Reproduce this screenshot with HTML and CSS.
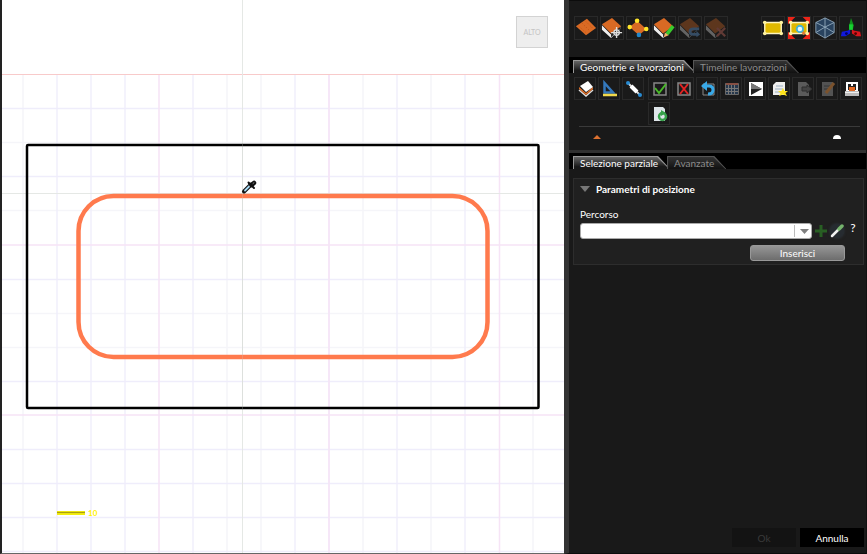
FILE: index.html
```html
<!DOCTYPE html>
<html lang="it">
<head>
<meta charset="utf-8">
<title>Geometrie e lavorazioni</title>
<link rel="stylesheet" href="styles.css">
</head>
<body>
<main class="app">
  <section class="viewport" aria-label="Vista pezzo">
    <svg class="drawing" viewBox="0 0 562 553" preserveAspectRatio="xMinYMin slice">
      <g fill="none" stroke-width="1">
        <path stroke="#f5f5f9" stroke-width="1.500" d="M21 74V553M225 74V553M259 74V553M361 74V553M429 74V553M531 74V553M0 142.500H562M0 210.500H562M0 313.500H562M0 347.500H562"/>
        <path stroke="#efedfb" stroke-width="1.300" d="M55 74V553M89 74V553M123 74V553M191 74V553M293 74V553M327 74V553M395 74V553M463 74V553M0 108.500H562M0 176.500H562M0 279.500H562M0 381.500H562M0 449.500H562M0 483.500H562M0 517.500H562M0 551.500H562"/>
        <path stroke="#f6e4f6" stroke-width="1.500" d="M157 74V553M327 74V553M497.500 74V553M0 245H562M0 415H562"/>
        <path stroke="#f8caca" d="M0 74.500H562"/>
        <path stroke="#e5e8e5" d="M240.500 0V553M0 193.500H562"/>
      </g>
      <rect x="25" y="145" width="511.500" height="263" rx="1" fill="none" stroke="#000" stroke-width="2.500"/>
      <rect x="76.500" y="196" width="409" height="161" rx="35" fill="none" stroke="#ff7a4d" stroke-width="4.500"/>
      <path d="M240.500 144V409" stroke="#c8ccc8" stroke-width="1" opacity=".25"/>
      <g stroke-linecap="round">
        <path d="M242 191.500L249 184.500" stroke="#111" stroke-width="4"/>
        <path d="M243 190.500L247.500 186" stroke="#a9dcf6" stroke-width="1.800"/>
        <path d="M246.500 182.500L252 188" stroke="#111" stroke-width="2"/>
        <path d="M249.500 185L252 183" stroke="#111" stroke-width="4.500"/>
        <path d="M251 183.500L252 182.700" stroke="#888" stroke-width="1"/>
      </g>
      <path d="M55 513H83" stroke="#f4ee10" stroke-width="4"/>
      <path d="M55 512.500H83" stroke="#aaa010" stroke-width="1.200"/>
      <text class="scale" x="86" y="516">10</text>
    </svg>
    <button class="view-face" type="button">ALTO</button>
  </section>

  <aside class="panel">
    <div class="toolbar">
      <div class="tools">
        <button class="tool" type="button" aria-label="Pezzo"><svg viewBox="0 0 24 24"><path fill="#d96a24" d="M1 10L13 2L23 12L12 20Z"/><path stroke="#b94f12" stroke-dasharray="1 2" d="M4 10L12 17M8 7L16 15M12 5L19 12"/></svg></button>
        <button class="tool" type="button" aria-label="Posiziona pezzo"><svg viewBox="0 0 24 24"><use href="#book"/><g fill="none" stroke="#ddd" stroke-width="1.500"><circle cx="17" cy="17" r="3"/><path d="M17 11V23M11 17H23"/></g></svg></button>
        <button class="tool" type="button" aria-label="Vertici"><svg viewBox="0 0 24 24"><path fill="#d96a24" d="M3 11L11 4L21 13L13 20Z"/><g fill="#ffe52a"><circle cx="11" cy="4" r="2.500"/><circle cx="3" cy="11" r="2.500"/><circle cx="21" cy="13" r="2.500"/></g><circle cx="13" cy="19.500" r="2.500" fill="#2286c8"/></svg></button>
        <button class="tool" type="button" aria-label="Modifica pezzo"><svg viewBox="0 0 24 24"><use href="#book"/><path stroke="#39c92c" stroke-width="4" d="M22 10L15 19"/><path fill="#f4b06b" d="M13 17L17 20L12 22Z"/></svg></button>
        <button class="tool off" type="button" disabled aria-label="Ripristina pezzo"><svg viewBox="0 0 24 24"><use href="#book"/><path fill="none" stroke="#69a9ee" stroke-width="3" d="M22 13H16Q12 13 12 16T16 19H20"/><path fill="#69a9ee" d="M19 15L23 19L19 22Z"/></svg></button>
        <button class="tool off" type="button" disabled aria-label="Elimina pezzo"><svg viewBox="0 0 24 24"><use href="#book"/><path stroke="#e57667" stroke-width="2.500" d="M13 12L22 21M22 12L13 21"/></svg></button>
      </div>
      <div class="tools">
        <button class="tool" type="button" aria-label="Adatta vista"><svg viewBox="0 0 24 24"><use href="#frame"/></svg></button>
        <button class="tool" type="button" aria-label="Zoom su pezzo"><svg viewBox="0 0 24 24"><path fill="#ee2418" d="M0 0H8L0 8ZM24 0V8L16 0ZM0 24V16L8 24ZM24 24H16L24 16Z"/><use href="#frame"/><path stroke="#dd7a35" stroke-width="3" d="M15 15L18 19"/><circle cx="13" cy="13" r="3.500" fill="#e8faff" stroke="#45b2d4" stroke-width="2"/></svg></button>
        <button class="tool" type="button" aria-label="Vista 3D"><svg viewBox="0 0 24 24"><path fill="#29435f" stroke="#8ea5b8" d="M12 1L22 6V17L12 23L2 17V6Z"/><path fill="none" stroke="#91a8bb" d="M2 6L12 11L22 6M12 1V23M2 17L12 11L22 17"/></svg></button>
        <button class="tool" type="button" aria-label="Assi"><svg viewBox="0 0 24 24"><path fill="#10951b" d="M12 1L15 9L14 14H10V9Z"/><path fill="#18d332" d="M10 8H14V14H10Z"/><path fill="#1018dd" d="M11 14V18L6 21H1L2 16L8 15Z"/><path fill="#d9151c" d="M13 14V18L18 21H23L22 16L16 15Z"/><circle cx="17" cy="18" r="1.500" fill="#500"/><circle cx="7" cy="18" r="1.500" fill="#006"/></svg></button>
      </div>
    </div>

    <div class="tabs" role="tablist">
      <button class="tab on" role="tab" aria-selected="true" type="button"><span>Geometrie e lavorazioni</span></button>
      <button class="tab" role="tab" aria-selected="false" type="button"><span>Timeline lavorazioni</span></button>
    </div>

    <div class="operations">
      <div class="op-groups">
        <div class="op-grid first">
          <button class="op" type="button" aria-label="Facce"><svg viewBox="0 0 22 22"><path fill="none" stroke="#ddd" stroke-width="1.500" d="M4 12L11 18L18 12"/><path fill="#dd6d26" d="M4 9L11 15L18 9V11L11 17L4 11Z"/><path fill="#fff" d="M5 8L13 3L18 9L11 14Z"/></svg></button>
          <button class="op" type="button" aria-label="Geometria"><svg viewBox="0 0 22 22"><path fill="none" stroke="#3478bc" stroke-width="2.500" d="M5.500 5V14.500H14Z"/><path stroke="#f2d94b" stroke-width="2.500" d="M4 17H18"/></svg></button>
          <button class="op" type="button" aria-label="Segmento"><svg viewBox="0 0 22 22"><path stroke="#ddd" stroke-width="2" d="M5 5L17 17"/><path stroke="#fff" stroke-width="4" d="M8 8L14 14"/><circle cx="5" cy="5" r="2" fill="#278bd2"/><circle cx="17" cy="17" r="2" fill="#278bd2"/></svg></button>
        </div>
        <div class="op-grid">
          <button class="op" type="button" aria-label="Attiva"><svg viewBox="0 0 22 22"><path fill="none" stroke="#888" stroke-width="1.500" d="M5 5H17V17H5Z"/><path fill="none" stroke="#49ba28" stroke-width="2" d="M6 10L10 15L17 6"/></svg></button>
          <button class="op" type="button" aria-label="Disattiva"><svg viewBox="0 0 22 22"><path fill="none" stroke="#888" stroke-width="1.500" d="M5 5H17V17H5Z"/><path stroke="#e32222" stroke-width="2" d="M7 6L15 16M15 6L7 16"/></svg></button>
          <button class="op" type="button" aria-label="Annulla selezione"><svg viewBox="0 0 22 22"><path fill="none" stroke="#888" d="M6 6H17V17H6Z"/><path fill="none" stroke="#38a9e8" stroke-width="3" d="M8 8H12Q16 8 16 12T11 16"/><path fill="#38a9e8" d="M4 8L10 3V13Z"/></svg></button>
          <button class="op" type="button" aria-label="Tabella"><svg viewBox="0 0 22 22"><path fill="#26384d" stroke="#686868" d="M4.500 5.500H17.500V16.500H4.500Z"/><path stroke="#777" d="M7.500 6V16M10.500 6V16M13.500 6V16M5 10.500H17M5 13.500H17"/><path stroke="#864f43" stroke-width="2" d="M5 6H17"/></svg></button>
          <button class="op" type="button" aria-label="Simula"><svg viewBox="0 0 22 22"><path fill="#fff" d="M4 4H18V18H4Z"/><path fill="#222" d="M6 5L17 11L6 17Z"/><path fill="#777" d="M6 5L17 11H6Z"/></svg></button>
          <button class="op" type="button" aria-label="Nuova lavorazione"><svg viewBox="0 0 22 22"><path fill="#eee" d="M7 4H16V17H4V7Z"/><path stroke="#9aaec0" d="M7 8H14M6 11H14M6 14H12"/><path fill="#ffe31c" d="M14 10L15.500 13H19L16.500 15L18 18L14 16.500L10 18L11.500 15L9 13H12.500Z"/></svg></button>
          <button class="op dim" type="button" disabled aria-label="Esporta lavorazione"><svg viewBox="0 0 22 22"><path fill="#aaa" d="M5 4H13L16 7V18H5Z"/><path fill="#777" stroke="#444" d="M9 9H14V7L19 11L14 15V13H9Z"/></svg></button>
          <button class="op dim" type="button" disabled aria-label="Modifica lavorazione"><svg viewBox="0 0 22 22"><path fill="#999" d="M5 4H16V18H5Z"/><path stroke="#555" d="M7 8H13M7 11H13"/><path stroke="#f19744" stroke-width="3" d="M17 5L9 15"/></svg></button>
          <button class="op" type="button" aria-label="Macchina"><svg viewBox="0 0 22 22"><path fill="#fff" d="M5 4H17V14H5Z"/><path fill="#222" d="M7 6H10V8H12V6H15V12H7Z"/><path fill="#e46922" d="M8 9H14V13H8Z"/><path fill="#bbb" d="M4 13H18V18H4Z"/><path stroke="#eee" d="M4 14.500H18"/></svg></button>
          <button class="op" type="button" aria-label="Aggiorna"><svg viewBox="0 0 22 22"><path fill="#dfe6ea" d="M5 4H14L16 6V18H5Z"/><circle cx="13.500" cy="13.500" r="3.500" fill="none" stroke="#36a14a" stroke-width="2.500"/><path fill="#36a14a" d="M12 7L17 10L12 13Z"/></svg></button>
        </div>
      </div>
      <div class="track">
        <svg class="mark" viewBox="0 0 10 5"><path fill="#dc7130" d="M1 4L5 0L9 4Z"/></svg>
        <svg class="mark" viewBox="0 0 10 5"><path fill="#fff" d="M1 4Q1 0 5 0T9 4Z"/></svg>
      </div>
    </div>

    <div class="tabs" role="tablist">
      <button class="tab on" role="tab" aria-selected="true" type="button"><span>Selezione parziale</span></button>
      <button class="tab" role="tab" aria-selected="false" type="button"><span>Avanzate</span></button>
    </div>

    <form class="params">
      <h2 class="params-title"><svg class="chevron" viewBox="0 0 10 6"><path fill="#777" d="M0 0H10L5 6Z"/></svg>Parametri di posizione</h2>
      <label class="label" for="percorso">Percorso</label>
      <div class="field">
        <div class="combo">
          <select id="percorso" class="select"><option></option></select>
          <svg class="arrow" viewBox="0 0 18 14"><path stroke="#bbb" d="M.5 1V13"/><path fill="#808080" d="M6 5H15L10.500 10Z"/></svg>
        </div>
        <button class="mini" type="button" aria-label="Aggiungi"><svg viewBox="0 0 14 14"><path stroke="#285f23" stroke-width="3" d="M7 1V13M1 7H13"/></svg></button>
        <button class="mini glow" type="button" aria-label="Preleva"><svg viewBox="0 0 14 14"><path stroke="#f2f2f2" stroke-width="2.500" stroke-linecap="round" d="M2 12L8 6"/><path stroke="#75b36c" stroke-width="3.500" stroke-linecap="round" d="M9 5L12 2"/></svg></button>
        <a class="help" href="#percorso">?</a>
      </div>
      <button class="insert" type="button">Inserisci</button>
    </form>

    <footer class="footer">
      <button class="action" type="button" disabled>Ok</button>
      <button class="action" type="button">Annulla</button>
    </footer>
  </aside>
</main>
<svg class="defs" aria-hidden="true">
  <defs>
    <g id="book"><path fill="#eee" d="M1 9L11 19L21 10V13L11 23L1 14Z"/><path fill="#222" d="M11 18L21 10V13L11 22Z"/><path fill="#d96a24" d="M1 8L12 1L22 10L11 18Z"/></g>
    <g id="frame"><path fill="#e0b900" stroke="#fff5bf" stroke-width="1.500" d="M3 6H21V18H3Z"/><g fill="#fff3a0"><circle cx="3" cy="6" r="2"/><circle cx="21" cy="6" r="2"/><circle cx="3" cy="18" r="2"/><circle cx="21" cy="18" r="2"/></g></g>
  </defs>
</svg>
</body>
</html>
```
FILE: styles.css
```css
* {
  box-sizing: border-box;
}

body {
  margin: 0;
  background: #191919;
  color: #fff;
  font-family: Lato, "Open Sans", sans-serif;
  font-size: 10px;
  line-height: 16px;
}

button,
select {
  margin: 0;
  padding: 0;
  border: 0;
  font: inherit;
  color: inherit;
}

.app {
  display: flex;
  height: 100vh;
}

.defs {
  position: absolute;
  width: 0;
  height: 0;
}

/* Drawing area */
.viewport {
  position: relative;
  flex: 1;
  min-width: 0;
  overflow: hidden;
  background: #fff;
  border-left: 2px solid #222;
  border-bottom: 1px solid #666;
}

.drawing {
  display: block;
  width: 100%;
  height: 100%;
}

.scale {
  fill: #fff200;
  font-size: 8px;
  font-weight: 700;
}

.view-face {
  position: absolute;
  top: 16px;
  right: 16px;
  width: 32px;
  height: 32px;
  background: #eee;
  border: 1px solid #d3d3d3;
  color: #c4c4c4;
  font-size: 7px;
}

/* Side panel */
.panel {
  display: flex;
  flex-direction: column;
  flex: 0 0 303px;
  border-left: 5px solid #333;
  border-right: 1px solid #111;
  border-bottom: 1px solid #0c0c0c;
}

.toolbar {
  display: flex;
  justify-content: space-between;
  padding: 15px 3px 17px 5px;
  border-top: 1px solid #0c0c0c;
}

.tools {
  display: flex;
  gap: 2px;
}

.tool,
.op {
  display: grid;
  place-items: center;
  background: #1a1a1a;
  border: 1px solid #292929;
}

.tool {
  width: 24px;
  height: 24px;
}

.tool svg,
.op svg {
  width: 22px;
  height: 22px;
  fill: none;
}

.off svg {
  opacity: 0.35;
}

.dim svg {
  opacity: 0.45;
}

/* Slanted tabs */
.tabs {
  display: flex;
  align-items: flex-end;
  height: 16px;
  padding: 0 4px;
  background: #000;
}

.tab {
  position: relative;
  height: 13px;
  padding: 0 12px 0 7px;
  background: #555;
  color: #8c8c8c;
  line-height: 12px;
  clip-path: polygon(0 0, calc(100% - 12px) 0, 100% 100%, 0 100%);
}

.tab::before {
  content: "";
  position: absolute;
  inset: 1px 1px 0;
  background: linear-gradient(#333, #111);
  clip-path: polygon(0 0, calc(100% - 12px) 0, 100% 100%, 0 100%);
}

.tab span {
  position: relative;
}

.tab + .tab {
  margin-left: -3px;
}

.tab.on {
  background: #999;
  color: #fff;
}

.tab.on::before {
  background: linear-gradient(#666, #191919 80%);
}

/* Operations */
.operations {
  padding: 4px 3px 10px 5px;
  border-bottom: 3px solid #303030;
}

.op-groups {
  display: flex;
  gap: 4px;
}

.op-grid {
  display: grid;
  grid-template-columns: repeat(9, 22px);
  align-content: start;
  gap: 2px;
}

.op-grid.first {
  grid-template-columns: repeat(3, 22px);
}

.op {
  width: 22px;
  height: 23px;
}

.track {
  display: flex;
  justify-content: space-between;
  margin: 1px 3px 0 5px;
  padding: 8px 18px 0 13px;
  border-top: 1px solid #3a3a3a;
}

.mark {
  width: 10px;
  height: 5px;
}

/* Parameters */
.params {
  display: flex;
  flex-direction: column;
  margin: 9px 2px 0 4px;
  padding: 2px 3px 3px 6px;
  background: #202020;
  border: 1px solid #2d2d2d;
}

.params-title {
  display: flex;
  align-items: center;
  gap: 6px;
  margin: 0;
  font-size: 10px;
  font-weight: 700;
}

.chevron {
  width: 10px;
  height: 6px;
}

.label {
  margin-top: 9px;
}

.field {
  display: flex;
  align-items: center;
  gap: 2px;
  height: 18px;
}

.combo {
  display: grid;
  flex: 1;
  align-items: center;
}

.select {
  grid-area: 1 / 1;
  width: 100%;
  height: 16px;
  appearance: none;
  background: #fff;
  border: 1px solid #aaa;
  border-radius: 3px;
}

.arrow {
  grid-area: 1 / 1;
  justify-self: end;
  width: 18px;
  height: 14px;
  pointer-events: none;
}

.mini {
  display: grid;
  place-items: center;
  width: 14px;
  height: 14px;
  background: none;
}

.mini svg {
  width: 14px;
  height: 14px;
}

.glow {
  border-radius: 7px;
  background: #262b30;
  box-shadow: 0 0 3px #303840;
}

.help {
  align-self: flex-start;
  width: 14px;
  color: #fff;
  font-size: 12px;
  line-height: 12px;
  text-align: center;
  text-decoration: none;
}

.insert {
  align-self: flex-end;
  width: 95px;
  height: 16px;
  margin: 5px 15px 0 0;
  background: linear-gradient(#969696, #6d6d6d);
  border: 1px solid #999;
  border-radius: 3px;
  line-height: 14px;
}

.footer {
  display: flex;
  justify-content: flex-end;
  gap: 4px;
  margin-top: auto;
  padding: 0 2px 6px;
}

.action {
  width: 64px;
  height: 19px;
  background: #000;
}

.action:disabled {
  background: #131313;
  color: #3a3a3a;
}
```
